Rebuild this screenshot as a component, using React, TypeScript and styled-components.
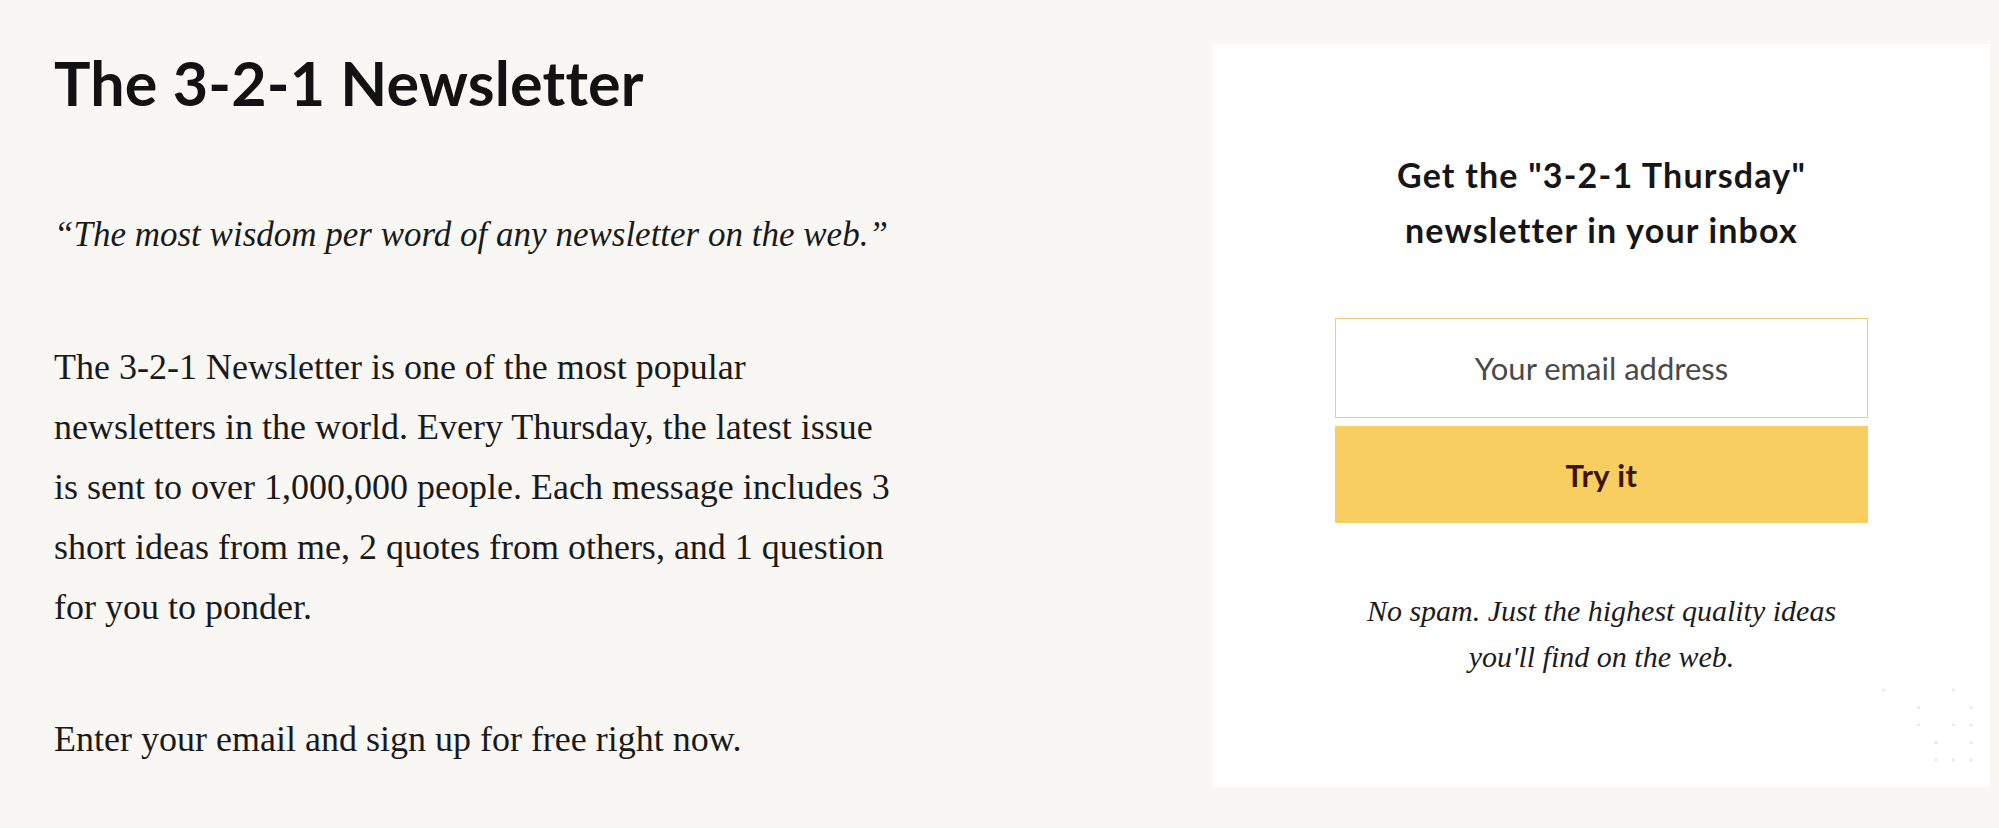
import React from "react";
import styled, { createGlobalStyle } from "styled-components";

const GlobalStyle = createGlobalStyle`
  html, body {
    margin: 0;
    padding: 0;
    background: #f8f7f4;
  }
  * { box-sizing: border-box; }
`;

const Page = styled.div`
  display: flex;
  flex-direction: row;
  align-items: flex-start;
  width: 1999px;
  height: 828px;
  padding: 0 9px 0 54px;
  background: #f8f7f4;
  overflow: hidden;
`;

const Intro = styled.section`
  flex: 1;
  display: flex;
  flex-direction: column;
  padding-top: 46px;
`;

const Title = styled.h1`
  margin: 0 0 85px 0;
  font-family: "Lato", "Liberation Sans", sans-serif;
  font-weight: 700;
  font-size: 61px;
  line-height: 74px;
  letter-spacing: 0.2px;
  color: #121212;
`;

const Paragraph = styled.p<{ $italic?: boolean }>`
  margin: 0 0 72px 0;
  font-family: "Liberation Serif", "Times New Roman", serif;
  font-style: ${(p) => (p.$italic ? "italic" : "normal")};
  font-size: ${(p) => (p.$italic ? "35px" : "36px")};
  line-height: 60px;
  color: #1a1a1a;
  white-space: nowrap;
`;

const Card = styled.aside`
  position: relative;
  width: 777px;
  height: 743px;
  margin-top: 44px;
  background: #ffffff;
  display: flex;
  flex-direction: column;
  align-items: center;
  padding-top: 103px;
`;

const CardHeading = styled.h2`
  margin: 0 0 61px 0;
  font-family: "Lato", "Liberation Sans", sans-serif;
  font-weight: 700;
  font-size: 34px;
  line-height: 55px;
  letter-spacing: 1.2px;
  text-align: center;
  color: #161616;
`;

const Form = styled.form`
  display: flex;
  flex-direction: column;
  gap: 8px;
  width: 533px;
`;

const EmailInput = styled.input`
  width: 100%;
  height: 100px;
  border: 1px solid #f3cf6b;
  background: #ffffff;
  text-align: center;
  font-family: "Lato", "Liberation Sans", sans-serif;
  font-size: 31px;
  color: #333;
  outline: none;
  &::placeholder {
    color: #4a4a4a;
  }
`;

const SubmitButton = styled.button`
  width: 100%;
  height: 97px;
  border: none;
  background: #f8ce60;
  font-family: "Lato", "Liberation Sans", sans-serif;
  font-weight: 700;
  font-size: 31px;
  letter-spacing: 0.4px;
  color: #3b150a;
  cursor: pointer;
`;

const Footnote = styled.p`
  margin: 65px 0 0 0;
  font-family: "Liberation Serif", "Times New Roman", serif;
  font-style: italic;
  font-size: 30px;
  line-height: 46px;
  text-align: center;
  color: #1c1c1c;
`;

const Dots = styled.svg`
  position: absolute;
  left: 667px;
  top: 642px;
  width: 100px;
  height: 80px;
`;

const cols = [3.5, 21, 38.5, 56, 73.5, 91];
const rows = [4, 21.5, 39, 56.5, 74];
const pattern: [number, number][] = [
  [0, 0], [0, 4],
  [1, 2], [1, 5],
  [2, 2], [2, 4], [2, 5],
  [3, 3], [3, 5],
  [4, 3], [4, 4], [4, 5],
];

export default function App() {
  return (
    <>
      <GlobalStyle />
      <Page>
        <Intro>
          <Title>The 3-2-1 Newsletter</Title>
          <Paragraph $italic>“The most wisdom per word of any newsletter on the web.”</Paragraph>
          <Paragraph>
            The 3-2-1 Newsletter is one of the most popular
            <br />
            newsletters in the world. Every Thursday, the latest issue
            <br />
            is sent to over 1,000,000 people. Each message includes 3
            <br />
            short ideas from me, 2 quotes from others, and 1 question
            <br />
            for you to ponder.
          </Paragraph>
          <Paragraph>Enter your email and sign up for free right now.</Paragraph>
        </Intro>
        <Card>
          <CardHeading>
            Get the "3-2-1 Thursday"
            <br />
            newsletter in your inbox
          </CardHeading>
          <Form onSubmit={(e) => e.preventDefault()}>
            <EmailInput type="email" placeholder="Your email address" />
            <SubmitButton type="submit">Try it</SubmitButton>
          </Form>
          <Footnote>
            No spam. Just the highest quality ideas
            <br />
            you'll find on the web.
          </Footnote>
          <Dots viewBox="0 0 100 80">
            {pattern.map(([r, c], i) => (
              <circle key={i} cx={cols[c]} cy={rows[r]} r={1.6} fill="#ebe8df" />
            ))}
          </Dots>
        </Card>
      </Page>
    </>
  );
}
